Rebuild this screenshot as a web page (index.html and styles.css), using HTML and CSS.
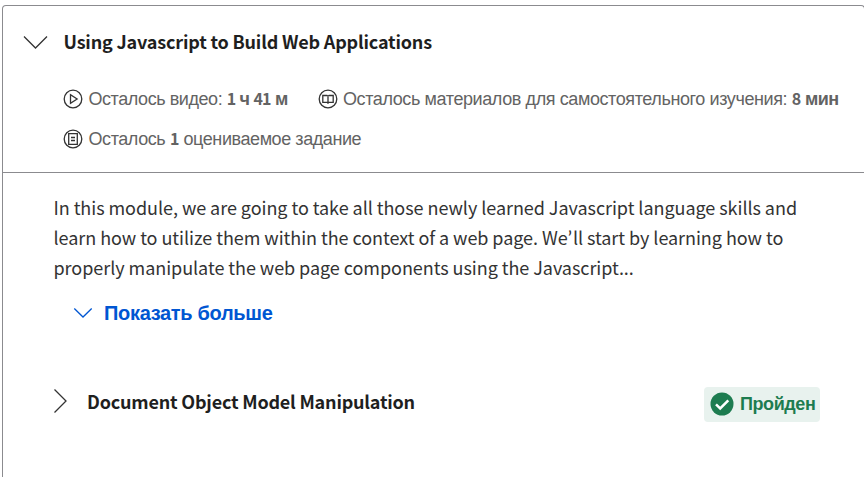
FILE: index.html
```html
<!DOCTYPE html>
<html lang="ru">
<head>
<meta charset="utf-8">
<title>Using Javascript to Build Web Applications</title>
<link rel="stylesheet" href="styles.css">
</head>
<body>
<main class="card">
  <header class="card-head">
    <div class="title-row">
      <svg class="chevron-down" width="26" height="15" viewBox="0 0 26 15"><path d="M2 1.5 13.5 13 25 1.5"/></svg>
      <h2 class="latin title">Using Javascript to Build Web Applications</h2>
    </div>
    <div class="meta">
      <div class="meta-item video">
        <svg class="icon" viewBox="0 0 20 20"><circle cx="10" cy="10" r="8.8"/><path d="M7.5 5.8v8.4l6.6-4.2z"/></svg>
        <span>Осталось видео: <b><i>1</i> ч <i>41</i> м</b></span>
      </div>
      <div class="meta-item reading">
        <svg class="icon" viewBox="0 0 20 20"><circle cx="10" cy="10" r="8.8"/><path d="M4.8 6.5H9l1 .7 1-.7h4.2v6.8H11l-1 .8-1-.8H4.8zM10 7.200V14"/></svg>
        <span>Осталось материалов для самостоятельного изучения: <b><i>8</i> мин</b></span>
      </div>
      <div class="meta-item task">
        <svg class="icon" viewBox="0 0 20 20"><circle cx="10" cy="10" r="8.8"/><path d="M5.7 4.7h8.6v10.6H5.7zM8 8.5h4M8 11.5h4"/></svg>
        <span>Осталось <b><i>1</i></b> оцениваемое задание</span>
      </div>
    </div>
  </header>
  <section class="card-body">
    <p class="latin description">In this module, we are going to take all those newly learned Javascript language skills and<br>learn how to utilize them within the context of a web page. We<span class="apostrophe">’</span>ll start by learning how to<br>properly manipulate the web page components using the Javascript...</p>
    <div class="more">
      <svg width="20" height="12" viewBox="0 0 20 12"><path d="M1.3 1.5 10 10l8.700-8.500"/></svg>
      <span>Показать больше</span>
    </div>
    <div class="lesson">
      <svg class="chevron-right" width="15" height="26" viewBox="0 0 15 26"><path d="M1.5 1.5 13 13 1.5 24.5"/></svg>
      <h3 class="latin lesson-title">Document Object Model Manipulation</h3>
      <div class="badge">
        <svg width="24" height="24" viewBox="0 0 24 24"><circle cx="12" cy="12" r="11.5"/><path d="m6 12.400 4.200 4.100L18.300 8.300"/></svg>
        <span>Пройден</span>
      </div>
    </div>
  </section>
</main>
</body>
</html>
```
FILE: styles.css
```css
* { box-sizing: border-box; }
html { overflow: hidden; }
body {
  margin: 0;
  padding: 5px 0 0 2px;
  height: 477px;
  overflow: hidden;
  background: #fff;
  color: #1f1f1f;
  font-family: "Liberation Sans", Arial, sans-serif;
}
svg { flex: none; fill: none; stroke: #333; stroke-width: 1.3; }
h2, h3, p { margin: 0; }
.latin { font-family: "Noto Sans CJK SC", "Liberation Sans", sans-serif; white-space: nowrap; }
.card {
  width: 863px;
  height: 472px;
  border: 1px solid #8b8b8f;
  border-bottom: 0;
  border-radius: 4px 4px 0 0;
}
.card-head {
  height: 167px;
  padding: 20px 0 0 19px;
  border-bottom: 1px solid #8b8b8f;
}
.title-row { display: flex; align-items: center; height: 30px; }
.chevron-down { margin-top: 2px; }
.title { margin-left: 15.5px; font-size: 18px; line-height: 30px; font-weight: 700; letter-spacing: -0.18px; }
.meta {
  display: grid;
  grid-template-columns: 254.5px 1fr;
  grid-auto-rows: 40px;
  margin: 23px 0 0 41px;
  color: #636363;
  font-size: 18px;
  letter-spacing: -0.4px;
}
.meta-item { display: flex; align-items: center; white-space: nowrap; }
.icon { width: 20px; height: 20px; margin-right: 5.5px; }
.meta i { font-family: "Noto Sans CJK SC", sans-serif; font-style: normal; font-size: 16px; line-height: 1; }
.video { letter-spacing: -0.44px; }
.video b { letter-spacing: -0.8px; }
.reading b { letter-spacing: -0.6px; }
.task { letter-spacing: -0.42px; }
.card-body { padding: 19px 44px 0 50px; }
.description { padding-left: 0.5px; font-size: 18px; line-height: 30px; color: #333; letter-spacing: -0.05px; }
.apostrophe { margin-right: 1px; font-family: Lato, sans-serif; font-size: 20px; line-height: 1; }
.more {
  display: flex;
  align-items: center;
  height: 30px;
  margin: 16px 0 0 20px;
  color: #0056d2;
  font-size: 20px;
  font-weight: 700;
  letter-spacing: -0.32px;
}
.more svg { margin-right: 11px; stroke: #0056d2; }
.lesson { display: flex; align-items: center; height: 36px; margin-top: 58px; }
.chevron-right, .lesson-title { margin-bottom: 6px; }
.lesson-title { margin-left: 19px; font-size: 18px; line-height: 30px; letter-spacing: -0.2px; }
.badge {
  display: flex;
  align-items: center;
  width: 116px;
  height: 35px;
  margin-left: auto;
  padding-left: 6px;
  border-radius: 4px;
  background: #e8f2ee;
  color: #1d7c50;
  font-size: 18px;
  font-weight: 700;
  letter-spacing: -0.42px;
}
.badge svg { margin-right: 6px; fill: #1d7c50; stroke: none; }
.badge path { fill: none; stroke: #fff; stroke-width: 2.5; }
```
